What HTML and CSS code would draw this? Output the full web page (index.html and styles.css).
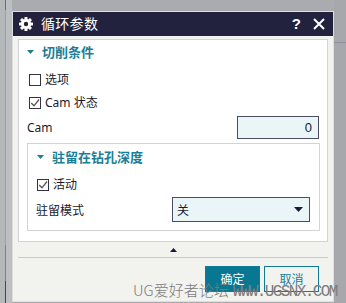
FILE: index.html
```html
<!DOCTYPE html>
<html lang="zh">
<head>
<meta charset="utf-8">
<title>循环参数</title>
<link rel="stylesheet" href="styles.css">
</head>
<body>
<div class="desk">
  <div class="left-strip"><div class="rule"></div></div>
  <div class="dialog">
    <div class="titlebar">
      <svg class="gear" width="14" height="14" viewBox="0 0 14 14">
        <g fill="#fff">
          <rect x="5.5" y="0" width="3" height="14" rx="0.5"/>
          <rect x="0" y="5.5" width="14" height="3" rx="0.5"/>
          <rect x="5.5" y="0" width="3" height="14" rx="0.5" transform="rotate(45 7 7)"/>
          <rect x="5.5" y="0" width="3" height="14" rx="0.5" transform="rotate(-45 7 7)"/>
          <circle cx="7" cy="7" r="5"/>
        </g>
        <circle cx="7" cy="7" r="2.2" fill="#22223f"/>
      </svg>
      <span class="title">循环参数</span>
      <span class="help">?</span>
      <svg class="close" width="12" height="12" viewBox="0 0 12 12">
        <path d="M1 1 L11 11 M11 1 L1 11" stroke="#fff" stroke-width="2" fill="none"/>
      </svg>
    </div>
    <div class="body">
      <div class="panel">
        <div class="sec-head">
          <svg class="tri" width="7" height="4" viewBox="0 0 7 4"><path d="M0 0 H7 L3.5 4 Z" fill="#1b7e96"/></svg>
          <span>切削条件</span>
        </div>
        <label class="check-row first">
          <span class="box"></span>
          <span>选项</span>
        </label>
        <label class="check-row">
          <span class="box"><svg width="10" height="10" viewBox="0 0 10 10"><path d="M1.2 5 L4 7.8 L9 1.5" stroke="#555" stroke-width="1.3" fill="none"/></svg></span>
          <span>Cam 状态</span>
        </label>
        <div class="field-row">
          <span>Cam</span>
          <div class="input">0</div>
        </div>
        <div class="group">
          <div class="sec-head group-head">
            <svg class="tri" width="7" height="4" viewBox="0 0 7 4"><path d="M0 0 H7 L3.5 4 Z" fill="#1b7e96"/></svg>
            <span>驻留在钻孔深度</span>
          </div>
          <label class="check-row group-check">
            <span class="box"><svg width="10" height="10" viewBox="0 0 10 10"><path d="M1.2 5 L4 7.8 L9 1.5" stroke="#555" stroke-width="1.3" fill="none"/></svg></span>
            <span>活动</span>
          </label>
          <div class="select-row">
            <span class="select-label">驻留模式</span>
            <div class="select">
              <span>关</span>
              <svg width="9" height="5" viewBox="0 0 9 5"><path d="M0 0 H9 L4.5 5 Z" fill="#1a1a3a"/></svg>
            </div>
          </div>
        </div>
      </div>
      <div class="toggle">
        <svg width="7" height="4" viewBox="0 0 7 4"><path d="M0 4 H7 L3.5 0 Z" fill="#1a1a3a"/></svg>
      </div>
      <div class="sep"></div>
      <div class="footer">
        <div class="btn primary">确定</div>
        <div class="btn">取消</div>
      </div>
    </div>
  </div>
  <div class="right-strip"><div class="hline"></div></div>
</div>
<div class="watermark"><span class="wm-cn">UG爱好者论坛</span><span class="wm-url">WWW.UGSNX.COM</span></div>
</body>
</html>
```
FILE: styles.css
```css
* { box-sizing: border-box; }
html, body { margin: 0; padding: 0; }
body {
  width: 346px;
  height: 303px;
  overflow: hidden;
  background: #a9abaf;
  font-family: "Noto Sans", "Noto Sans CJK SC", sans-serif;
  font-size: 12px;
  color: #1a1a2a;
  position: relative;
}
.desk {
  display: flex;
  height: 303px;
}
.left-strip {
  width: 12px;
  background: linear-gradient(to right, #b5b8bb 0 5px, #bcbfc2 5px);
  padding-left: 5px;
}
.rule {
  width: 1px;
  height: 100%;
  background: linear-gradient(to bottom, #6a6b6e 0 10px, #9ea1a4 10px 245px, #8f8a3a 245px 281px, #8a2a2a 281px);
}
.right-strip {
  flex: 1;
  background: #a7a8ac;
}
.hline {
  margin-top: 42px;
  height: 1px;
  background: #8d8f9a;
}
.dialog {
  margin-top: 11px;
  width: 322px;
  height: 291px;
  border: 1px solid #dedee0;
  background: #f2f2ee;
  display: flex;
  flex-direction: column;
}
.titlebar {
  height: 24px;
  background: #22223f;
  display: flex;
  align-items: center;
  padding-left: 6px;
  color: #fff;
}
.gear { flex: none; }
.title {
  margin-left: 8px;
  font-size: 14px;
  line-height: 24px;
  letter-spacing: 0.3px;
}
.help {
  margin-left: auto;
  font-family: "Liberation Sans", sans-serif;
  font-weight: bold;
  font-size: 15px;
  line-height: 24px;
}
.close {
  margin-left: 12px;
  margin-right: 8px;
}
.body {
  flex: 1;
  padding: 3px 5px 0;
  display: flex;
  flex-direction: column;
}
.panel {
  border: 1px solid #d2d2d8;
  background: #fff;
  padding: 0 7px 10px 8px;
  display: flex;
  flex-direction: column;
}
.sec-head {
  height: 23px;
  display: flex;
  align-items: center;
  color: #1b7e96;
  font-weight: bold;
  font-size: 13px;
}
.sec-head .tri { margin-right: 8px; margin-top: 1px; }
.check-row {
  height: 23px;
  display: flex;
  align-items: center;
  padding-left: 2px;
  line-height: 14px;
}
.check-row.first { margin-top: 5px; }
.box {
  width: 12px;
  height: 12px;
  border: 1px solid #333340;
  background: #fff;
  margin-right: 4px;
  display: flex;
  align-items: center;
  justify-content: center;
}
.field-row {
  margin-top: 2px;
  height: 23px;
  display: flex;
  align-items: center;
}
.input {
  margin-left: auto;
  margin-right: 1px;
  width: 82px;
  height: 23px;
  border: 1px solid #4b4b63;
  background: #eaf5f7;
  text-align: right;
  padding-right: 6px;
  line-height: 21px;
  font-family: "Liberation Sans", sans-serif;
  font-size: 13px;
}
.group {
  margin-top: 4px;
  border: 1px solid #d2d2d8;
  padding: 0 9px 8px 9px;
  display: flex;
  flex-direction: column;
}
.group-head { height: 24px; }
.group-check { margin-top: 5px; padding-left: 0; }
.select-row {
  margin-top: 1px;
  height: 25px;
  display: flex;
  align-items: center;
}
.select-label { flex: 1; margin-left: -1px; }
.select {
  width: 138px;
  height: 25px;
  border: 1px solid #4b4b63;
  background: #eaf5f7;
  display: flex;
  align-items: center;
  justify-content: space-between;
  padding: 0 6px 0 4px;
}
.toggle {
  height: 15px;
  display: flex;
  align-items: center;
  justify-content: center;
}
.sep {
  height: 1px;
  background: #c9c9d6;
}
.footer {
  padding-top: 8px;
  padding-right: 9px;
  display: flex;
  justify-content: flex-end;
  gap: 4px;
}
.btn {
  width: 55px;
  height: 26px;
  border: 1px solid #127b93;
  color: #1b7e96;
  display: flex;
  align-items: center;
  justify-content: center;
  font-size: 12px;
}
.btn.primary {
  background: #087892;
  color: #fff;
}
.watermark {
  position: absolute;
  left: 133px;
  top: 280px;
  width: 210px;
  color: #7c7c7c;
  white-space: nowrap;
  line-height: 20px;
  overflow: hidden;
}
.wm-cn {
  font-family: "Noto Sans CJK SC", sans-serif;
  font-weight: 300;
  font-size: 15px;
}
.wm-url {
  margin-left: 4px;
  font-family: "Liberation Mono", monospace;
  font-size: 16px;
  letter-spacing: -1.6px;
}
```
